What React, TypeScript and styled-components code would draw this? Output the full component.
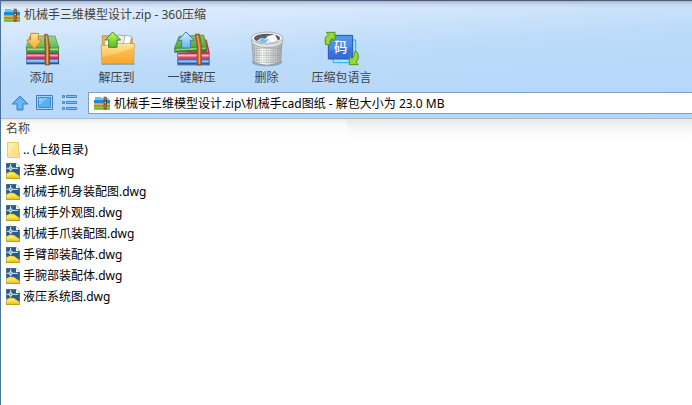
import React from "react";
import styled, { createGlobalStyle } from "styled-components";

const GlobalStyle = createGlobalStyle`
  html, body, #root { height: 100%; }
  body { margin: 0; background: #fff; }
  *, *::before, *::after { box-sizing: border-box; }
  body, button, input {
    font-family: "Noto Sans", "Noto Sans CJK SC", sans-serif;
    font-size: 12px;
    line-height: 16px;
  }
`;

const Window = styled.main`
  display: flex;
  flex-direction: column;
  min-height: 100%;
  background: #fff;
  border-left: 1px solid #4c7299;
  overflow: hidden;
`;

const Chrome = styled.header`
  border-top: 1px solid #4b5d7c;
  border-bottom: 1px solid #b4bac2;
  background:
    linear-gradient(#a9b5cb 0, rgba(190, 202, 222, 0.6) 3px, transparent 7px),
    linear-gradient(176deg, #dfedfd 0, #d6e8fc 32px, #bbdbf9 76px, #b3d6fb 100%);
`;

const TitleBar = styled.div`
  display: flex;
  align-items: center;
  gap: 4px;
  height: 27px;
  padding-left: 3px;
`;

const Title = styled.h1`
  margin: 0;
  font-size: 12px;
  font-weight: 400;
  color: #404040;
`;

const Toolbar = styled.div`
  display: flex;
  padding: 3px 3px 0;
`;

const Tool = styled.button`
  display: flex;
  flex-direction: column;
  align-items: center;
  gap: 3px;
  width: 75px;
  padding: 0;
  border: 0;
  background: transparent;
  color: #3f4246;
  white-space: nowrap;
`;

const NavBar = styled.nav`
  display: flex;
  align-items: center;
  gap: 7px;
  padding: 6px 0 4px 10px;
`;

const NavButton = styled.button`
  display: flex;
  padding: 0;
  border: 0;
  background: transparent;
`;

const AddressBox = styled.label`
  display: flex;
  flex: 1;
  align-items: center;
  gap: 4px;
  height: 22px;
  margin-left: 2px;
  padding-left: 5px;
  border: 1px solid #7d9fc4;
  border-right: 0;
  background: #fff;
`;

const Address = styled.input`
  flex: 1;
  min-width: 0;
  height: 18px;
  padding: 0;
  border: 0;
  outline: 0;
  background: transparent;
  color: #000;
`;

const FileTable = styled.table`
  width: 100%;
  table-layout: fixed;
  border-collapse: collapse;
`;

const HeadCell = styled.th<{ $empty?: boolean }>`
  height: 20px;
  padding: 0 0 0 5px;
  text-align: left;
  font-weight: 400;
  color: #444;
  background: ${(p) =>
    p.$empty
      ? "linear-gradient(#e6e6e6, #f5f5f5 8px, #fff)"
      : "linear-gradient(#ebebeb, #f9f9f9 5px, #fff)"};
`;

const Cell = styled.td`
  height: 21px;
  padding: 0 0 0 5px;
  color: #000;
`;

const Entry = styled.div`
  display: flex;
  align-items: center;
  gap: 3px;
  height: 21px;
  white-space: nowrap;
`;

function ArchiveIcon() {
  return (
    <svg width="16" height="14" viewBox="0 0 48 42" aria-hidden="true">
      <path d="M3 3H20L23 6H44V18H3Z" fill="#62c5f4" />
      <path d="M0 12H48V23H0Z" fill="#198bd8" />
      <path d="M0 22H48V32H0Z" fill="#ee781c" />
      <path d="M0 23H48V26H0Z" fill="#ffc05b" />
      <path d="M0 31H48V41H0Z" fill="#5aa51c" />
      <path d="M0 34H48V37H0Z" fill="#b4dd49" />
      <path d="M29 2H38V41H29Z" fill="#8a5028" />
      <path d="M30 13H38V25H30Z" fill="#3d2724" />
      <path d="M33 3V38" stroke="#d69d63" strokeWidth="2" />
      <path d="M32 18H36V22H32Z" fill="#ddd" />
    </svg>
  );
}

function AddIcon() {
  return (
    <svg width="36" height="36" viewBox="0 0 108 108" aria-hidden="true">
      <defs>
        <linearGradient id="addLid" x2="0" y2="1">
          <stop stopColor="#9bd58a" />
          <stop offset="1" stopColor="#62b655" />
        </linearGradient>
        <linearGradient id="addArrow" x2="0" y2="1">
          <stop stopColor="#ffe59a" />
          <stop offset="1" stopColor="#fba62e" />
        </linearGradient>
        <linearGradient id="strap">
          <stop stopColor="#87421a" />
          <stop offset=".5" stopColor="#d98c4a" />
          <stop offset="1" stopColor="#8d4719" />
        </linearGradient>
      </defs>
      <path d="M5 98H107V102H5Z" fill="#6a88ad" opacity=".5" />
      <path d="M7 82H105V99H7Z" fill="#1e57a5" />
      <path d="M9 85H102V95H9Z" fill="#5da1e4" />
      <path d="M9 88H102V91H9Z" fill="#b9dcfa" />
      <path d="M7 66H105V83H7Z" fill="#b02b55" />
      <path d="M9 69H102V79H9Z" fill="#e3628a" />
      <path d="M9 72H102V75H9Z" fill="#f5a9bd" />
      <path d="M18 15H93L105 51H6Z" fill="url(#addLid)" stroke="#4b9444" strokeWidth="2" />
      <path d="M6 50H105V67H7Z" fill="#2f8740" />
      <path d="M9 52H103V58H9Z" fill="#a4dc80" />
      <path d="M9 61H103V63H9Z" fill="#55a958" />
      <path d="M62 10H71L77 48V102H63V48Z" fill="url(#strap)" stroke="#87451d" strokeWidth="2" />
      <path d="M66 14L70 48V98" fill="none" stroke="#efb06d" strokeWidth="3" />
      <path d="M20 7H43V27H54L31 54L8 27H20Z" fill="url(#addArrow)" stroke="#d58525" strokeWidth="3" />
    </svg>
  );
}

function ExtractIcon() {
  return (
    <svg width="36" height="36" viewBox="0 0 108 108" aria-hidden="true">
      <defs>
        <linearGradient id="folder" x2="0" y2="1">
          <stop stopColor="#ffe69a" />
          <stop offset="1" stopColor="#fcae32" />
        </linearGradient>
        <linearGradient id="greenArrow" x2="0" y2="1">
          <stop stopColor="#c9f66a" />
          <stop offset="1" stopColor="#5fb916" />
        </linearGradient>
      </defs>
      <path d="M7 97H107V102H7Z" fill="#687f9d" opacity=".5" />
      <path d="M10 14H31L37 21H100V65H10Z" fill="#e8b156" stroke="#b98331" strokeWidth="2" />
      <path d="M18 20H58V50H18Z" fill="#fff" stroke="#aaa" strokeWidth="2" />
      <path d="M56 12L82 15L77 49H52Z" fill="#eee" stroke="#919191" strokeWidth="2" />
      <path d="M79 12L98 17L90 50H70Z" fill="#fff" stroke="#929292" strokeWidth="2" />
      <path d="M6 44L39 43L46 38H106L104 98H9Z" fill="url(#folder)" stroke="#d38a2b" strokeWidth="2" />
      <path d="M10 78Q64 67 102 50V94H10Z" fill="#fa9e24" opacity=".45" />
      <path d="M9 47H40L47 41H103" fill="none" stroke="#fff3bd" strokeWidth="2" />
      <path d="M41 3L65 27H54V49H29V27H18Z" fill="url(#greenArrow)" stroke="#438c20" strokeWidth="3" />
    </svg>
  );
}

function OneClickIcon() {
  return (
    <svg width="36" height="36" viewBox="0 0 108 108" aria-hidden="true">
      <defs>
        <linearGradient id="blueArrow" x2="0" y2="1">
          <stop stopColor="#d3f2ff" />
          <stop offset="1" stopColor="#60b6f5" />
        </linearGradient>
        <linearGradient id="book" x2="0" y2="1">
          <stop stopColor="#83c65a" />
          <stop offset="1" stopColor="#55a936" />
        </linearGradient>
      </defs>
      <path d="M11 99H108V104H11Z" fill="#607998" opacity=".5" />
      <path d="M10 83H107V101H10Z" fill="#2c58a6" />
      <path d="M13 86H104V96H13Z" fill="#5f93dc" />
      <path d="M13 89H104V92H13Z" fill="#b0d2f7" />
      <path d="M87 24L98 26L107 64V83H10V66L80 61Z" fill="#b53551" />
      <path d="M12 69H104V79H12Z" fill="#e98096" />
      <path d="M12 72H104V75H12Z" fill="#fac3cc" />
      <path d="M91 27L95 29L103 64H99Z" fill="#e66a82" />
      <path d="M15 16L89 12L98 48L1 52Z" fill="url(#book)" stroke="#438837" strokeWidth="2" />
      <path d="M1 51L98 47V61L1 65Z" fill="#307d30" />
      <path d="M4 53L95 49V55L4 59Z" fill="#8bcf60" />
      <path d="M64 9H76L83 45V102H69V48Z" fill="#b7662d" stroke="#894818" strokeWidth="2" />
      <path d="M70 13L76 47V98" fill="none" stroke="#e5a56b" strokeWidth="4" />
      <path d="M36 3L60 28H49V51H23V28H12Z" fill="url(#blueArrow)" stroke="#3c7ec8" strokeWidth="3" />
    </svg>
  );
}

function DeleteIcon() {
  return (
    <svg width="36" height="36" viewBox="0 0 108 108" aria-hidden="true">
      <defs>
        <linearGradient id="bin">
          <stop stopColor="#b4b4b4" />
          <stop offset=".35" stopColor="#fff" />
          <stop offset="1" stopColor="#a9aaac" />
        </linearGradient>
        <pattern id="mesh" width="7" height="7" patternUnits="userSpaceOnUse">
          <path d="M1 1H4V4H1Z" fill="#777a80" />
        </pattern>
      </defs>
      <ellipse cx="54" cy="94" rx="46" ry="12" fill="#5c718a" opacity=".45" />
      <path d="M9 31H99L95 92Q54 113 13 92Z" fill="url(#bin)" stroke="#888b90" strokeWidth="2" />
      <path d="M13 48H95L92 90Q54 105 16 90Z" fill="url(#mesh)" />
      <ellipse cx="54" cy="30" rx="47" ry="20" fill="#e2e3e5" stroke="#929397" strokeWidth="2" />
      <ellipse cx="54" cy="21" rx="47" ry="18" fill="#f3f3f3" stroke="#949599" strokeWidth="2" />
      <ellipse cx="54" cy="22" rx="39" ry="14" fill="#5b5e64" />
      <path d="M23 30L37 20L49 23L56 15L78 10L87 29Q59 42 23 30Z" fill="#e5edf3" />
      <path d="M30 30L39 20L50 27L60 22L50 37Z" fill="#72c2ec" />
      <path d="M55 17L76 11L85 27L68 35Z" fill="#f8f9fa" />
    </svg>
  );
}

function LanguageIcon() {
  return (
    <svg width="36" height="36" viewBox="0 0 108 108" aria-hidden="true">
      <defs>
        <linearGradient id="tile" x2="0" y2="1">
          <stop stopColor="#488ce7" />
          <stop offset="1" stopColor="#3568d3" />
        </linearGradient>
      </defs>
      <path d="M28 27H95V95H28Z" fill="#a1e8fc" stroke="#2ba9df" strokeWidth="3" />
      <path d="M13 13H86V84H13Z" fill="url(#tile)" stroke="#2758bc" strokeWidth="3" />
      <path d="M16 16H83V49L16 59Z" fill="#7ab0ee" opacity=".3" />
      <text x="50" y="63" textAnchor="middle" fill="#fff" fontSize="40" fontWeight="500" fontFamily="Noto Sans CJK SC">码</text>
      <path d="M5 41Q-1 18 13 11L7 4H33V29L25 22Q16 26 18 41Z" fill="#9bd635" stroke="#4f9720" strokeWidth="3" />
      <path d="M97 61Q110 78 96 94L103 101H76V75L84 83Q93 76 91 62Z" fill="#9bd635" stroke="#4f9720" strokeWidth="3" />
    </svg>
  );
}

function UpIcon() {
  return (
    <svg width="18" height="18" viewBox="0 0 18 18" aria-hidden="true">
      <path d="M9 2L17 10H12V16H6V10H1Z" fill="#55adf4" stroke="#3f85c6" />
      <path d="M9 4L14 9H11V14H7V9H4Z" fill="#6bb6f6" />
    </svg>
  );
}

function ViewIcon() {
  return (
    <svg width="18" height="18" viewBox="0 0 18 18" aria-hidden="true">
      <path d="M.5 1.5H16.5V15.5H.5Z" fill="#a5d4fb" stroke="#3a80c2" />
      <path d="M2.5 3.5H14.5V13.5H2.5Z" fill="#5caef2" stroke="#4389ca" />
      <path d="M3 4H12L3 11Z" fill="#81c5fb" />
      <path d="M4 5V7M4 9V10" stroke="#c5e6ff" />
    </svg>
  );
}

function ListIcon() {
  return (
    <svg width="18" height="18" viewBox="0 0 18 18" aria-hidden="true">
      <path
        d="M1.5 1.5H3.5V3.5H1.5ZM5.5 1.5H15.5V3.5H5.5ZM1.5 7.5H3.5V9.5H1.5ZM5.5 7.5H15.5V9.5H5.5ZM1.5 13.5H3.5V15.5H1.5ZM5.5 13.5H15.5V15.5H5.5Z"
        fill="#83c4f9"
        stroke="#4386c5"
      />
    </svg>
  );
}

function FolderIcon() {
  return (
    <svg width="14" height="16" viewBox="0 0 14 16" aria-hidden="true">
      <path d="M1.5 .5H12.5V10L13.5 11V15.5H1.5Z" fill="#fce28e" stroke="#edcc67" />
      <path d="M2 1H11L2 13Z" fill="#ffebaa" />
      <path d="M11.5 11V15" stroke="#f6d776" />
    </svg>
  );
}

function DrawingIcon() {
  return (
    <svg width="14" height="16" viewBox="0 0 42 48" aria-hidden="true">
      <path d="M1 1H31L41 11V47H1Z" fill="#2a5c88" stroke="#2b5c82" strokeWidth="2" />
      <path d="M1 31L12 26L24 27L41 39V47H1Z" fill="#f6d12c" />
      <path d="M3 33L13 28L24 31L34 38Q16 34 3 41Z" fill="#ffe765" />
      <path d="M1 46H41" stroke="#c39a13" strokeWidth="3" />
      <path d="M30 0V12H42Z" fill="#f3f8fb" />
      <path d="M2 16H10M18 16H36M14 3V12M14 20V25" stroke="#dceaf2" strokeWidth="3" />
      <path d="M10 12H18V20H10Z" fill="#6d93b0" stroke="#fff" strokeWidth="2" />
    </svg>
  );
}

const tools = [
  { label: "添加", Icon: AddIcon },
  { label: "解压到", Icon: ExtractIcon },
  { label: "一键解压", Icon: OneClickIcon },
  { label: "删除", Icon: DeleteIcon },
  { label: "压缩包语言", Icon: LanguageIcon },
];

const navigation = [
  { label: "向上", Icon: UpIcon },
  { label: "视图", Icon: ViewIcon },
  { label: "列表", Icon: ListIcon },
];

const files = [
  "活塞.dwg",
  "机械手机身装配图.dwg",
  "机械手外观图.dwg",
  "机械手爪装配图.dwg",
  "手臂部装配体.dwg",
  "手腕部装配体.dwg",
  "液压系统图.dwg",
];

export default function App() {
  return (
    <>
      <GlobalStyle />
      <Window>
        <Chrome>
          <TitleBar>
            <ArchiveIcon />
            <Title>机械手三维模型设计.zip - 360压缩</Title>
          </TitleBar>
          <Toolbar>
            {tools.map(({ label, Icon }) => (
              <Tool key={label} type="button">
                <Icon />
                {label}
              </Tool>
            ))}
          </Toolbar>
          <NavBar>
            {navigation.map(({ label, Icon }) => (
              <NavButton key={label} type="button" aria-label={label}>
                <Icon />
              </NavButton>
            ))}
            <AddressBox>
              <ArchiveIcon />
              <Address
                aria-label="路径"
                defaultValue="机械手三维模型设计.zip\机械手cad图纸 - 解包大小为 23.0 MB"
              />
            </AddressBox>
          </NavBar>
        </Chrome>
        <FileTable>
          <thead>
            <tr>
              <HeadCell scope="col">名称</HeadCell>
              <HeadCell as="td" $empty />
            </tr>
          </thead>
          <tbody>
            <tr>
              <Cell colSpan={2}>
                <Entry>
                  <FolderIcon />
                  .. (上级目录)
                </Entry>
              </Cell>
            </tr>
            {files.map((name) => (
              <tr key={name}>
                <Cell colSpan={2}>
                  <Entry>
                    <DrawingIcon />
                    {name}
                  </Entry>
                </Cell>
              </tr>
            ))}
          </tbody>
        </FileTable>
      </Window>
    </>
  );
}
